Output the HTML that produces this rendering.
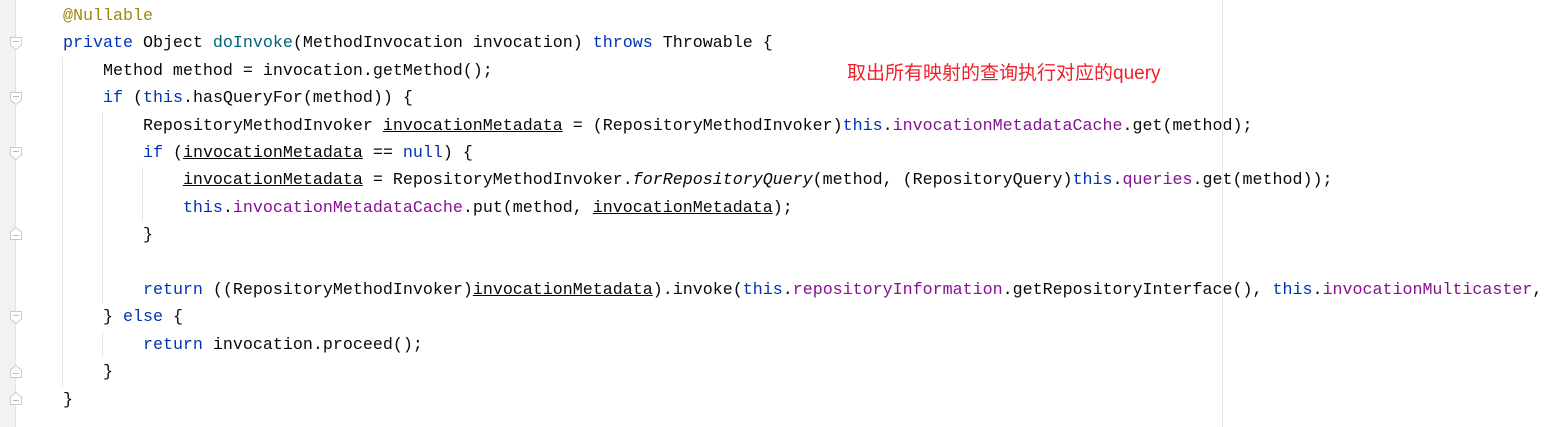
<!DOCTYPE html>
<html><head><meta charset="utf-8"><style>
body{margin:0;width:1550px;height:427px;background:#fff;position:relative;overflow:hidden}
.g{position:absolute;left:0;top:0;width:15px;height:427px;background:#f2f2f2;border-right:1px solid #e4e4e4}
.code{position:absolute;left:23px;top:3px;font-family:"Liberation Mono",monospace;font-size:16.67px;line-height:27.4px;color:#080808;white-space:pre}
.k{color:#0033b3}.f{color:#871094}.a{color:#9e880d}.m{color:#00627a}.u{text-decoration:underline}.i{font-style:italic}
.ig{position:absolute;width:1px;background:#e6e6e6}
.rm{position:absolute;left:1222px;top:0;width:1px;height:427px;background:#e8e8e8}
.note{position:absolute;left:847px;top:58px;font-family:"Liberation Sans","Noto Sans CJK SC",sans-serif;font-size:19px;color:#f0202a;white-space:nowrap}
.fd{position:absolute;left:10px;width:12px;height:13px}
</style></head><body>
<div class="g"></div>
<div class="rm"></div>
<div class="ig" style="left:62px;top:57px;height:330px"></div>
<div class="ig" style="left:102px;top:112px;height:192px"></div>
<div class="ig" style="left:102px;top:332px;height:25px"></div>
<div class="ig" style="left:142px;top:167px;height:55px"></div>
<svg class="fd" style="top:37px" viewBox="0 0 12 13"><path d="M0.5 0.5H11.5V8L6 12.5L0.5 8Z" fill="#fff" stroke="#ccc"/><path d="M3 4.5H9" stroke="#bbb"/></svg>
<svg class="fd" style="top:92px" viewBox="0 0 12 13"><path d="M0.5 0.5H11.5V8L6 12.5L0.5 8Z" fill="#fff" stroke="#ccc"/><path d="M3 4.5H9" stroke="#bbb"/></svg>
<svg class="fd" style="top:147px" viewBox="0 0 12 13"><path d="M0.5 0.5H11.5V8L6 12.5L0.5 8Z" fill="#fff" stroke="#ccc"/><path d="M3 4.5H9" stroke="#bbb"/></svg>
<svg class="fd" style="top:227px" viewBox="0 0 12 13"><path d="M0.5 12.5H11.5V5L6 0.5L0.5 5Z" fill="#fff" stroke="#ccc"/><path d="M3 8.5H9" stroke="#bbb"/></svg>
<svg class="fd" style="top:311px" viewBox="0 0 12 13"><path d="M0.5 0.5H11.5V8L6 12.5L0.5 8Z" fill="#fff" stroke="#ccc"/><path d="M3 4.5H9" stroke="#bbb"/></svg>
<svg class="fd" style="top:365px" viewBox="0 0 12 13"><path d="M0.5 12.5H11.5V5L6 0.5L0.5 5Z" fill="#fff" stroke="#ccc"/><path d="M3 8.5H9" stroke="#bbb"/></svg>
<svg class="fd" style="top:392px" viewBox="0 0 12 13"><path d="M0.5 12.5H11.5V5L6 0.5L0.5 5Z" fill="#fff" stroke="#ccc"/><path d="M3 8.5H9" stroke="#bbb"/></svg>
<div class="code">    <span class="a">@Nullable</span>
    <span class="k">private</span> Object <span class="m">doInvoke</span>(MethodInvocation invocation) <span class="k">throws</span> Throwable {
        Method method = invocation.getMethod();
        <span class="k">if</span> (<span class="k">this</span>.hasQueryFor(method)) {
            RepositoryMethodInvoker <span class="u">invocationMetadata</span> = (RepositoryMethodInvoker)<span class="k">this</span>.<span class="f">invocationMetadataCache</span>.get(method);
            <span class="k">if</span> (<span class="u">invocationMetadata</span> == <span class="k">null</span>) {
                <span class="u">invocationMetadata</span> = RepositoryMethodInvoker.<span class="i">forRepositoryQuery</span>(method, (RepositoryQuery)<span class="k">this</span>.<span class="f">queries</span>.get(method));
                <span class="k">this</span>.<span class="f">invocationMetadataCache</span>.put(method, <span class="u">invocationMetadata</span>);
            }

            <span class="k">return</span> ((RepositoryMethodInvoker)<span class="u">invocationMetadata</span>).invoke(<span class="k">this</span>.<span class="f">repositoryInformation</span>.getRepositoryInterface(), <span class="k">this</span>.<span class="f">invocationMulticaster</span>,
        } <span class="k">else</span> {
            <span class="k">return</span> invocation.proceed();
        }
    }</div>
<div class="note">取出所有映射的查询执行对应的query</div>
</body></html>
